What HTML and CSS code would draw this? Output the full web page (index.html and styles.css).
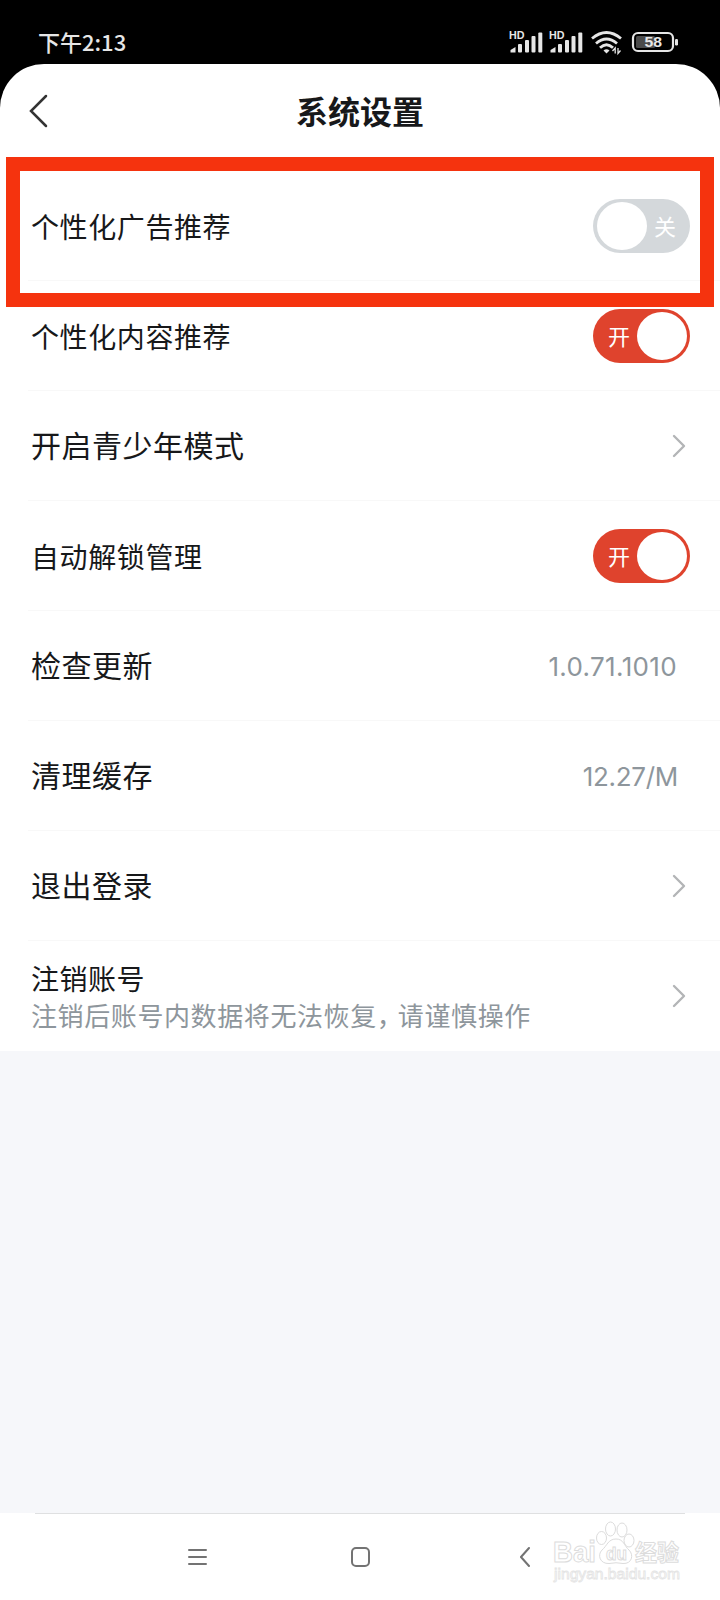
FILE: index.html
```html
<!DOCTYPE html>
<html lang="zh-CN">
<head>
<meta charset="utf-8">
<title>系统设置</title>
<link rel="stylesheet" href="styles.css">
</head>
<body>
<div class="phone">
  <div class="status">
    <span class="time">下午2:13</span>
    <svg class="status-icons" width="170" height="28" viewBox="0 0 170 28">
      <g class="light">
        <g id="signal">
          <text class="hd" x="0" y="9" textLength="15.5" lengthAdjust="spacingAndGlyphs">HD</text>
          <path d="M1.500 22.500V20L6.500 17V22.500Z"/>
          <rect x="9" y="14" width="4" height="8.500" rx="1"/>
          <rect x="16" y="10" width="4" height="12.500" rx="1"/>
          <rect x="22.500" y="6" width="4" height="16.500" rx="1"/>
          <rect x="29.300" y="2.500" width="4" height="20" rx="1"/>
        </g>
        <use href="#signal" x="40"/>
        <path d="M97.500 23.500L94.500 20.500Q97.500 18 100.500 20.500Z"/>
      </g>
      <g fill="none" stroke="#e6e6e6">
        <path stroke-width="2.800" d="M83 8.500Q97.500 -3.500 112 8.500M87 13.500Q97.500 4.500 108 13.500M91 17.800Q97.500 11.500 104 17.800"/>
        <path stroke-width="1.300" d="M106.200 23.500V18L103.500 21M109 18V23.500L111.500 20.500"/>
        <rect x="124" y="3" width="40" height="18" rx="5" stroke-width="2.200"/>
      </g>
      <rect x="127" y="6" width="19" height="12" rx="1.500" fill="#4b4b4b"/>
      <rect x="166" y="9" width="3" height="6.500" rx="1.200" fill="#e6e6e6"/>
      <text class="battery" x="135.500" y="17.200" textLength="17.500" lengthAdjust="spacingAndGlyphs">58</text>
    </svg>
  </div>

  <header class="header">
    <svg class="back" width="20" height="36" viewBox="0 0 20 36"><path d="M18 3L3 18L18 33"/></svg>
    <h1 class="title">系统设置</h1>
  </header>

  <main class="list">
    <div class="row"><span class="label">个性化广告推荐</span><span class="toggle off"><i class="knob"></i><b class="word">关</b></span></div>
    <div class="row"><span class="label">个性化内容推荐</span><span class="toggle on"><b class="word">开</b><i class="knob"></i></span></div>
    <div class="row"><span class="label wide">开启青少年模式</span><svg class="chevron" width="16" height="26" viewBox="0 0 16 26"><path d="M3 3L13 13L3 23"/></svg></div>
    <div class="row"><span class="label">自动解锁管理</span><span class="toggle on"><b class="word">开</b><i class="knob"></i></span></div>
    <div class="row"><span class="label wide">检查更新</span><span class="value version">1.0.71.1010</span></div>
    <div class="row"><span class="label wide">清理缓存</span><span class="value size">12.27/M</span></div>
    <div class="row"><span class="label wide">退出登录</span><svg class="chevron" width="16" height="26" viewBox="0 0 16 26"><path d="M3 3L13 13L3 23"/></svg></div>
    <div class="row last">
      <div class="stack"><span class="label">注销账号</span><span class="note">注销后账号内数据将无法恢复<span class="comma">，</span>请谨慎操作</span></div>
      <svg class="chevron" width="16" height="26" viewBox="0 0 16 26"><path d="M3 3L13 13L3 23"/></svg>
    </div>
  </main>

  <div class="highlight"></div>

  <nav class="nav">
    <svg width="20" height="22" viewBox="0 0 20 22"><path d="M1 4H18M1 11H18M1 18H18"/></svg>
    <svg class="home" width="22" height="22" viewBox="0 0 22 22"><rect x="2" y="2" width="17" height="18" rx="4"/></svg>
    <svg width="12" height="22" viewBox="0 0 12 22"><path d="M9 2L1 11L9 20"/></svg>
  </nav>

  <svg class="watermark" width="140" height="70" viewBox="0 0 140 70">
    <g class="outline">
      <text class="bai" x="4" y="42" textLength="43" lengthAdjust="spacingAndGlyphs">Bai</text>
      <text class="cn" x="86" y="41" textLength="44" lengthAdjust="spacingAndGlyphs">经验</text>
      <ellipse cx="52.500" cy="18" rx="5" ry="6.500"/>
      <ellipse cx="61.500" cy="9" rx="5" ry="7"/>
      <ellipse cx="73" cy="10" rx="5" ry="7"/>
      <ellipse cx="80" cy="20.500" rx="5" ry="6.500"/>
      <path d="M67 19C59 19 58 26 53 30C48 35 51 44 60 43.500Q67 42 74 43.500C83 44 85 35 80 30C75 26 75 19 67 19Z"/>
      <text class="du" x="57" y="40" textLength="21" lengthAdjust="spacingAndGlyphs">du</text>
    </g>
    <text class="url" x="5" y="59" textLength="126" lengthAdjust="spacingAndGlyphs">jingyan.baidu.com</text>
  </svg>
</div>
</body>
</html>
```
FILE: styles.css
```css
* { box-sizing: border-box; }
body {
  margin: 0;
  background: #000;
  font-family: "Noto Sans CJK SC", "Noto Sans", sans-serif;
}
.phone {
  position: relative;
  display: flex;
  flex-direction: column;
  width: 720px;
  height: 1600px;
  overflow: hidden;
  background: #f6f7fa;
}
.status {
  display: flex;
  justify-content: space-between;
  align-items: flex-start;
  height: 112px;
  flex: none;
  margin-bottom: -48px;
  padding: 26px 41px 0 38px;
  background: #000;
  color: #e6e6e6;
}
.time { font-size: 22px; line-height: 30px; font-weight: 500; white-space: nowrap; }
.status-icons { margin-top: 4px; }
.light { fill: #e6e6e6; }
.hd { font: 700 10.500px "Liberation Sans", sans-serif; }
.battery { font: 700 14px "Liberation Sans", sans-serif; fill: #e6e6e6; }
.header {
  position: relative;
  display: flex;
  align-items: center;
  flex: none;
  height: 107px;
  padding: 0 28px 13px;
  border-radius: 44px 44px 0 0;
  background: #fff;
}
.back path { fill: none; stroke: #333; stroke-width: 2.500; stroke-linecap: round; }
.title {
  flex: 1;
  margin: 0 20px 3px 0;
  color: #17181a;
  font-size: 32px;
  line-height: 44px;
  font-weight: 700;
  text-align: center;
}
.list { flex: none; background: #fff; }
.row {
  display: flex;
  align-items: center;
  justify-content: space-between;
  height: 110px;
  margin-left: 28px;
  padding: 0 30px 0 3px;
  border-bottom: 1px solid #f8f8f8;
}
.last { border-bottom: 0; }
.label { color: #17181a; font-size: 28px; line-height: 40px; letter-spacing: .6px; white-space: nowrap; }
.wide { font-size: 30px; letter-spacing: .5px; padding-bottom: 3px; }
.stack { display: flex; flex-direction: column; padding-top: 1px; }
.stack .label { line-height: 36px; letter-spacing: .5px; }
.note { color: #8e969c; font-size: 26px; line-height: 38px; letter-spacing: .6px; white-space: nowrap; }
.comma { letter-spacing: -5px; }
.toggle {
  display: flex;
  align-items: center;
  justify-content: space-between;
  width: 97px;
  height: 54px;
  border-radius: 27px;
}
.off { padding: 0 14px 0 4px; background: #d4d8db; }
.on { padding: 0 3px 0 15px; background: #df432d; }
.knob { width: 50px; height: 48px; border-radius: 50%; background: #fff; }
.word { color: #fff; font-size: 22px; line-height: 30px; font-weight: 400; padding-bottom: 2px; }
.chevron { margin-right: 3px; }
.chevron path { fill: none; stroke: #b3b5b7; stroke-width: 2.400; stroke-linecap: round; stroke-linejoin: round; }
.value { color: #8e969c; font-family: Inter, Roboto, sans-serif; font-size: 26px; line-height: 36px; white-space: nowrap; margin-right: 13px; padding-top: 2px; }
.version { letter-spacing: .35px; }
.size { letter-spacing: -.3px; margin-right: 12px; }
.highlight {
  position: absolute;
  left: 6px;
  top: 157px;
  width: 708px;
  height: 150px;
  border: 14px solid #f5330e;
}
.nav {
  position: relative;
  display: flex;
  align-items: center;
  justify-content: space-between;
  flex: none;
  height: 87px;
  margin-top: auto;
  padding: 0 188px;
  background: #fff;
}
.nav::before {
  content: "";
  position: absolute;
  left: 35px;
  right: 35px;
  top: 0;
  height: 1px;
  background: #dfe0e1;
}
.nav svg { fill: none; stroke: #737373; stroke-width: 2; stroke-linecap: round; }
.nav .home { margin-right: 6px; }
.watermark { position: absolute; left: 549px; top: 1520px; }
.outline { fill: #fff; stroke: #dcdcdc; stroke-width: 1; }
.bai { font: 700 29px "Liberation Sans", sans-serif; }
.du { font: 700 19px "Liberation Sans", sans-serif; }
.cn { font: 700 23px "Noto Sans CJK SC", sans-serif; }
.url { font: 15px "Liberation Sans", sans-serif; fill: #fff; stroke: #e4e4e4; stroke-width: .8; }
```
